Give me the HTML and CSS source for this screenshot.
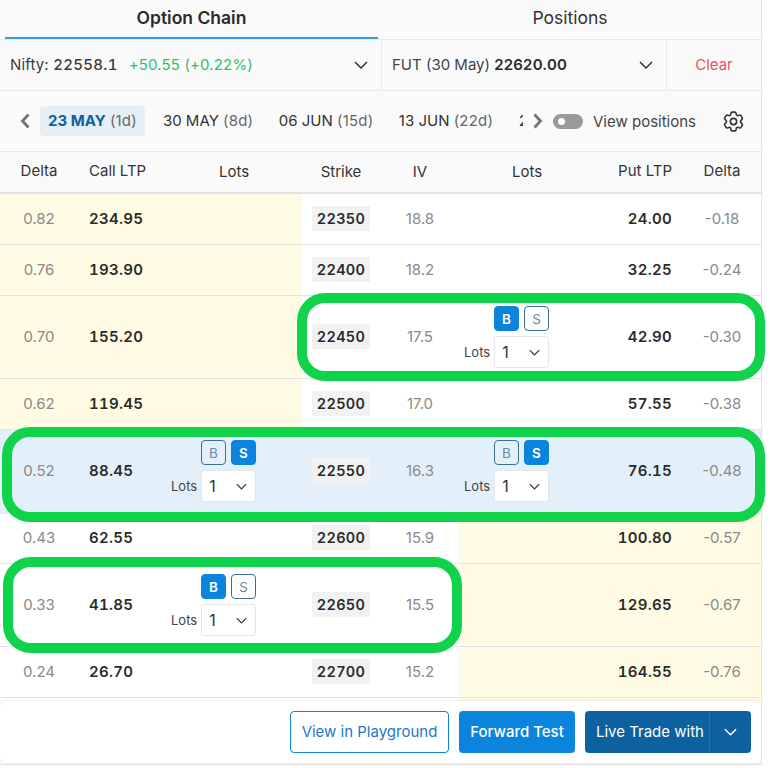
FILE: index.html
```html
<!DOCTYPE html>
<html lang="en">
<head>
<meta charset="utf-8">
<title>Option Chain</title>
<link rel="stylesheet" href="styles.css">
</head>
<body>
<div class="panel">
  <div class="tabs">
    <div class="tab tab-active">Option Chain</div>
    <div class="tab">Positions</div>
  </div>
  <div class="selects">
    <div class="select select-spot">
      <span>Nifty: <span class="spot-price">22558.1</span></span>
      <span class="change">+50.55 (+0.22%)</span>
      <svg class="chev" viewBox="0 0 14 8"><path d="M1 1l6 6 6-6"/></svg>
    </div>
    <div class="select select-fut">
      <span>FUT (30 May) <b class="fut-price">22620.00</b></span>
      <svg class="chev" viewBox="0 0 14 8"><path d="M1 1l6 6 6-6"/></svg>
    </div>
    <div class="clear">Clear</div>
  </div>
  <div class="dates">
    <svg class="arrow arrow-left" viewBox="0 0 10 16"><path d="M8.5 1.5L2.5 8l6 6.5"/></svg>
    <div class="date-scroll">
      <div class="date date-active"><b>23 MAY</b> <span class="days">(1d)</span></div>
      <div class="date">30 MAY <span class="days">(8d)</span></div>
      <div class="date">06 JUN <span class="days">(15d)</span></div>
      <div class="date">13 JUN <span class="days">(22d)</span></div>
      <div class="date">20 JUN <span class="days">(29d)</span></div>
    </div>
    <svg class="arrow arrow-right" viewBox="0 0 10 16"><path d="M1.5 1.5l6 6.5-6 6.5"/></svg>
    <div class="toggle"><span class="knob"></span></div>
    <div class="view-pos">View positions</div>
    <svg class="gear" viewBox="0 0 24 24"><path d="M9.594 3.94c.09-.542.56-.94 1.11-.94h2.593c.55 0 1.02.398 1.11.94l.213 1.281c.063.374.313.686.645.87.074.04.147.083.22.127.325.196.72.257 1.075.124l1.217-.456a1.125 1.125 0 0 1 1.37.49l1.296 2.247a1.125 1.125 0 0 1-.26 1.431l-1.003.827c-.293.241-.438.613-.43.992a7.723 7.723 0 0 1 0 .255c-.008.378.137.75.43.991l1.004.827c.424.35.534.955.26 1.43l-1.298 2.247a1.125 1.125 0 0 1-1.369.491l-1.217-.456c-.355-.133-.75-.072-1.076.124a6.47 6.47 0 0 1-.22.128c-.331.183-.581.495-.644.869l-.213 1.281c-.09.543-.56.94-1.11.94h-2.594c-.55 0-1.019-.398-1.11-.94l-.213-1.281c-.062-.374-.312-.686-.644-.87a6.52 6.52 0 0 1-.22-.127c-.325-.196-.72-.257-1.076-.124l-1.217.456a1.125 1.125 0 0 1-1.369-.49l-1.297-2.247a1.125 1.125 0 0 1 .26-1.431l1.004-.827c.292-.24.437-.613.43-.991a6.932 6.932 0 0 1 0-.255c.007-.38-.138-.751-.43-.992l-1.004-.827a1.125 1.125 0 0 1-.26-1.43l1.297-2.247a1.125 1.125 0 0 1 1.37-.491l1.216.456c.356.133.751.072 1.076-.124.072-.044.146-.086.22-.128.332-.183.582-.495.644-.869l.214-1.28Z"/><path d="M15 12a3 3 0 1 1-6 0 3 3 0 0 1 6 0Z"/></svg>
  </div>
  <div class="row head">
    <div class="c-delta">Delta</div><div class="c-ltp">Call LTP</div><div class="c-lots-h">Lots</div><div class="c-strike-h">Strike</div><div class="c-iv-h">IV</div><div class="c-lots-h">Lots</div><div class="c-put">Put LTP</div><div class="c-delta-r">Delta</div>
  </div>
  <div class="table">
    <div class="row">
      <div class="c-delta muted itm">0.82</div><div class="c-ltp val itm">234.95</div><div class="itm"></div><div class="c-strike"><span class="strike">22350</span></div><div class="c-iv">18.8</div><div></div><div class="c-put val">24.00</div><div class="c-delta-r muted">-0.18</div>
    </div>
    <div class="row">
      <div class="c-delta muted itm">0.76</div><div class="c-ltp val itm">193.90</div><div class="itm"></div><div class="c-strike"><span class="strike">22400</span></div><div class="c-iv">18.2</div><div></div><div class="c-put val">32.25</div><div class="c-delta-r muted">-0.24</div>
    </div>
    <div class="row row-tall">
      <div class="c-delta muted itm">0.70</div><div class="c-ltp val itm">155.20</div><div class="itm"></div><div class="c-strike"><span class="strike">22450</span></div><div class="c-iv">17.5</div>
      <div class="order">
        <div class="bs"><span class="btn btn-on">B</span><span class="btn">S</span></div>
        <div class="lots"><span class="lots-label">Lots</span><div class="qty"><span>1</span><svg class="chev-sm" viewBox="0 0 14 8"><path d="M1 1l6 6 6-6"/></svg></div></div>
      </div>
      <div class="c-put val">42.90</div><div class="c-delta-r muted">-0.30</div>
    </div>
    <div class="row">
      <div class="c-delta muted itm">0.62</div><div class="c-ltp val itm">119.45</div><div class="itm"></div><div class="c-strike"><span class="strike">22500</span></div><div class="c-iv">17.0</div><div></div><div class="c-put val">57.55</div><div class="c-delta-r muted">-0.38</div>
    </div>
    <div class="row row-tall row-atm">
      <div class="c-delta muted">0.52</div><div class="c-ltp val">88.45</div>
      <div class="order">
        <div class="bs"><span class="btn">B</span><span class="btn btn-on">S</span></div>
        <div class="lots"><span class="lots-label">Lots</span><div class="qty"><span>1</span><svg class="chev-sm" viewBox="0 0 14 8"><path d="M1 1l6 6 6-6"/></svg></div></div>
      </div>
      <div class="c-strike"><span class="strike">22550</span></div><div class="c-iv">16.3</div>
      <div class="order">
        <div class="bs"><span class="btn">B</span><span class="btn btn-on">S</span></div>
        <div class="lots"><span class="lots-label">Lots</span><div class="qty"><span>1</span><svg class="chev-sm" viewBox="0 0 14 8"><path d="M1 1l6 6 6-6"/></svg></div></div>
      </div>
      <div class="c-put val">76.15</div><div class="c-delta-r muted">-0.48</div>
    </div>
    <div class="row row-short">
      <div class="c-delta muted">0.43</div><div class="c-ltp val">62.55</div><div></div><div class="c-strike"><span class="strike">22600</span></div><div class="c-iv">15.9</div><div class="itm"></div><div class="c-put val itm">100.80</div><div class="c-delta-r muted itm">-0.57</div>
    </div>
    <div class="row row-tall">
      <div class="c-delta muted">0.33</div><div class="c-ltp val">41.85</div>
      <div class="order">
        <div class="bs"><span class="btn btn-on">B</span><span class="btn">S</span></div>
        <div class="lots"><span class="lots-label">Lots</span><div class="qty"><span>1</span><svg class="chev-sm" viewBox="0 0 14 8"><path d="M1 1l6 6 6-6"/></svg></div></div>
      </div>
      <div class="c-strike"><span class="strike">22650</span></div><div class="c-iv">15.5</div><div class="itm"></div><div class="c-put val itm">129.65</div><div class="c-delta-r muted itm">-0.67</div>
    </div>
    <div class="row">
      <div class="c-delta muted">0.24</div><div class="c-ltp val">26.70</div><div></div><div class="c-strike"><span class="strike">22700</span></div><div class="c-iv">15.2</div><div class="itm"></div><div class="c-put val itm">164.55</div><div class="c-delta-r muted itm">-0.76</div>
    </div>
    <div class="row row-cut">
      <div></div><div></div><div></div><div></div><div></div><div class="itm"></div><div class="itm"></div><div class="itm"></div>
    </div>
  </div>
  <div class="footer">
    <div class="fbtn fbtn-outline">View in Playground</div>
    <div class="fbtn fbtn-blue">Forward Test</div>
    <div class="fbtn fbtn-dark"><span class="live">Live Trade with</span><span class="live-chev"><svg class="chev-w" viewBox="0 0 14 8"><path d="M1 1l6 6 6-6"/></svg></span></div>
  </div>
</div>
<div class="ring ring-1"></div>
<div class="ring ring-2"></div>
<div class="ring ring-3"></div>
</body>
</html>
```
FILE: styles.css
```css
* { box-sizing: border-box; }
html, body { margin: 0; height: 768px; overflow: hidden; background: #fff; }
body { position: relative; font-family: Inter, "Liberation Sans", sans-serif; color: #2a2a2a; font-size: 15px; }
.panel { width: 762px; height: 765px; background: #fafafa; border-right: 1px solid #e6e6e6; border-bottom: 1px solid #e0e0e0; display: flex; flex-direction: column; overflow: hidden; }

.tabs { display: flex; height: 40px; border-bottom: 1px solid #e8e8e8; flex: none; }
.tab { display: flex; justify-content: center; padding-top: 7px; font-size: 17.5px; line-height: 21px; color: #333; }
.tab:first-child { width: 373px; margin-left: 5px; height: 39px; }
.tab:last-child { flex: 1; padding-left: 1px; }
.tab-active { font-weight: 600; color: #2a2a2a; border-bottom: 2px solid #3b99e0; }

.selects { display: flex; height: 51px; border-bottom: 1px solid #e8e8e8; flex: none; align-items: stretch; }
.select { display: flex; align-items: center; padding-bottom: 1px; font-size: 15px; color: #3c3c3c; }
.select-spot { width: 382px; padding-left: 10px; padding-right: 13px; border-right: 1px solid #e8e8e8; letter-spacing: .15px; }
.spot-price { font-weight: 500; letter-spacing: .3px; font-variant-numeric: tabular-nums; }
.change { color: #2fbf71; margin-left: 11px; }
.select-fut { width: 285px; padding-left: 10px; padding-right: 13px; border-right: 1px solid #e8e8e8; color: #444; }
.fut-price { color: #2a2a2a; font-weight: 600; letter-spacing: .2px; }
.chev { width: 14px; height: 8px; margin-left: auto; fill: none; stroke: #333; stroke-width: 1.5; }
.clear { flex: 1; display: flex; align-items: center; justify-content: center; padding-bottom: 1px; color: #e8535c; font-size: 15px; }

.dates { display: flex; align-items: center; height: 61px; flex: none; border-bottom: 1px solid #e8e8e8; }
.arrow { width: 10px; height: 16px; flex: none; fill: none; stroke: #757575; stroke-width: 2.8; }
.arrow-left { margin-left: 20px; margin-right: 10px; }
.date-scroll { width: 483px; display: flex; align-items: center; gap: 9.5px; overflow: hidden; flex: none; white-space: nowrap; }
.date { flex: none; height: 30px; line-height: 30px; padding: 0 8px; border-radius: 4px; font-size: 15px; color: #333; }
.date-active { background: #e6eef6; color: #0d619f; margin-right: .5px; }
.date-active b { font-weight: 700; }
.days { color: #666; letter-spacing: .2px; }
.arrow-right { margin-left: 10px; }
.toggle { width: 30px; height: 15px; border-radius: 8px; background: #9a9a9a; margin-left: 10px; position: relative; flex: none; }
.knob { position: absolute; left: 5px; top: 4px; width: 7px; height: 7px; border-radius: 50%; background: #fff; }
.view-pos { margin-left: 10px; font-size: 15px; color: #444; white-space: nowrap; }
.gear { width: 25px; height: 25px; margin-left: 25px; flex: none; fill: none; stroke: #2f2f2f; stroke-width: 1.5; stroke-linecap: round; stroke-linejoin: round; }

.row { display: grid; grid-template-columns: 78px 88px 136px 78px 79px 136px 88px 78px; height: 51px; border-bottom: 1px solid #e3e3e3; background: #fff; align-items: stretch; flex: none; }
.row > div { display: flex; align-items: center; }
.head { height: 42px; padding-bottom: 1px; border-bottom: 2px solid #e3e3e3; background: #fafafa; color: #333; font-size: 15px; }
.table { flex: 1; overflow: hidden; min-height: 0; }
.row > div.c-strike, .row > .c-iv, .row > .c-delta, .row > .c-ltp, .row > .c-put, .row > .c-delta-r { padding-bottom: 2px; }
.row-tall { height: 83px; }
.row-atm { background: #e3f0fa; height: 84px; }
.row-short { height: 50px; }
.row-cut { height: 8px; border-bottom: 0; }
.itm { background: #fffbe5; }

.c-delta { justify-content: center; }
.c-ltp { justify-content: flex-start; padding-left: 11px; }
.c-lots-h { justify-content: center; }
.c-strike, .c-strike-h { justify-content: center; }
.c-iv, .c-iv-h { justify-content: center; padding-left: 1px; }
.c-iv { color: #8a8a8a; }
.c-put { justify-content: flex-end; padding-right: 11px; }
.c-delta-r { justify-content: center; }
.muted { color: #8a8a8a; }
.val { font-weight: 600; color: #2a2a2a; letter-spacing: .3px; font-variant-numeric: tabular-nums; }
.strike { background: #f2f2f2; font-weight: 600; font-size: 14.5px; letter-spacing: .3px; width: 58px; text-align: center; height: 25px; line-height: 25px; color: #2a2a2a; font-variant-numeric: tabular-nums; }

.row > .order { flex-direction: column; align-items: flex-start; justify-content: center; padding-left: 5px; gap: 5px; }
.row-atm > .order { padding-bottom: 1px; }
.bs { display: flex; gap: 5px; margin-left: 30px; }
.btn { width: 25px; height: 25px; border: 1px solid #3a6f96; border-radius: 4px; display: flex; align-items: center; justify-content: center; font-size: 13.5px; color: #6d8ca5; background: transparent; }
.btn-on { background: #0a84dc; border-color: #0a84dc; color: #fff; font-weight: 600; }
.lots { display: flex; align-items: center; gap: 4px; }
.lots-label { font-size: 13px; color: #444; padding-bottom: 1px; }
.qty { width: 55px; height: 32px; border: 1px solid #e6e6e6; border-radius: 3px; background: #fff; display: flex; align-items: center; padding: 0 7px; font-size: 16px; color: #333; }
.chev-sm { width: 11px; height: 7px; margin-left: auto; margin-right: 1px; fill: none; stroke: #333; stroke-width: 1.5; }

.footer { flex: none; height: 62px; margin-bottom: 1px; display: flex; justify-content: flex-end; align-items: center; gap: 10px; padding: 0 10px 0 0; background: #fff; border-radius: 6px; box-shadow: 0 0 3px rgba(0,0,0,.12); position: relative; }
.fbtn { height: 42px; padding-bottom: 1px; display: flex; align-items: center; justify-content: center; border-radius: 4px; font-size: 15px; font-weight: 500; white-space: nowrap; }
.fbtn-outline { width: 159px; border: 1px solid #0a84dc; color: #1d78c9; background: #fff; font-weight: 400; }
.fbtn-blue { width: 116px; background: #0a84dc; color: #fff; }
.fbtn-dark { width: 166px; background: #0d619f; color: #fff; justify-content: flex-start; }
.live { padding-left: 11px; width: 124px; font-weight: 400; }
.live-chev { flex: 1; align-self: stretch; display: flex; align-items: center; justify-content: center; border-left: 1px solid #2a74ad; }
.chev-w { width: 13px; height: 8px; fill: none; stroke: #fff; stroke-width: 1.6; }

.ring { position: absolute; border: 10px solid #10d24b; border-radius: 28px; pointer-events: none; }
.ring-1 { left: 297px; top: 293px; width: 468px; height: 88px; }
.ring-2 { left: 2px; top: 427px; width: 763px; height: 95px; }
.ring-3 { left: 3px; top: 557px; width: 459px; height: 96px; }
```
